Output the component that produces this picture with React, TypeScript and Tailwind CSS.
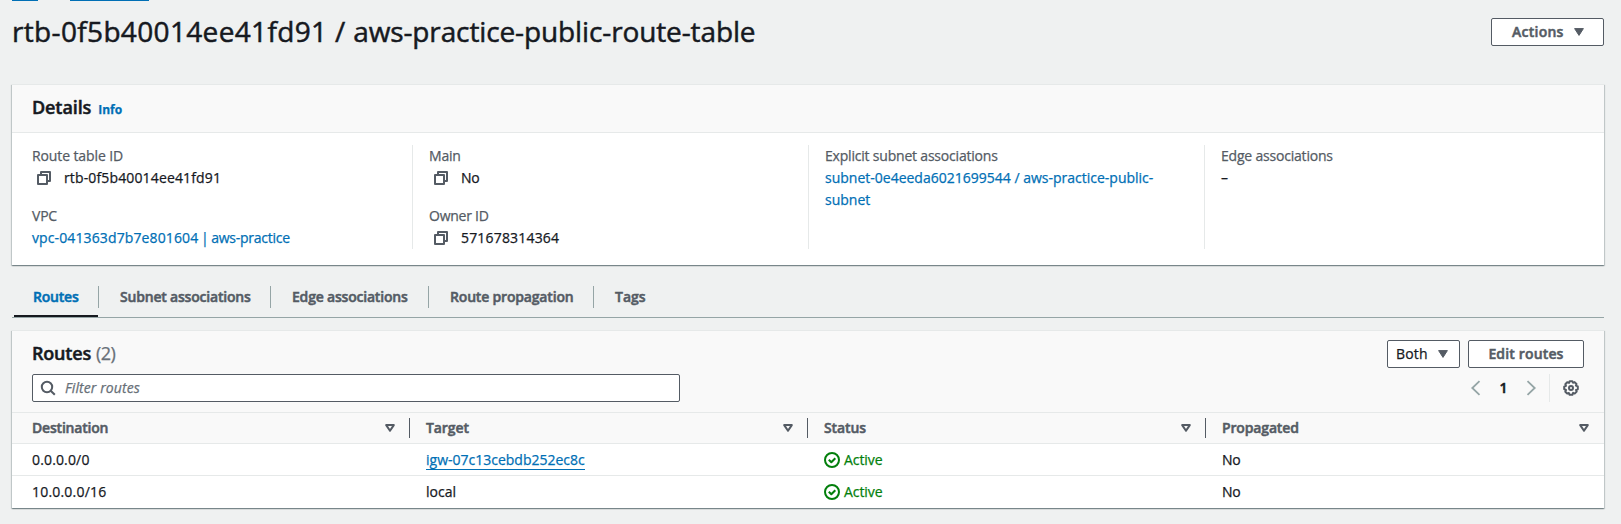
import React, { type ReactNode } from "react";

const bold = "font-semibold [-webkit-text-stroke:0.5px_currentColor]";

function CopyIcon() {
  return (
    <svg viewBox="0 0 16 16" className="mr-3 ml-1 size-4 shrink-0" fill="none" stroke="#545b64" strokeWidth="2" strokeLinejoin="round">
      <path d="M2 5h9v9H2z" />
      <path d="M5 5V2h9v9h-3" />
    </svg>
  );
}

function CaretFilled() {
  return (
    <svg viewBox="0 0 10 8" className="h-2 w-2.5 shrink-0" fill="#545b64" stroke="#545b64" strokeLinejoin="round">
      <path d="M.6.6h8.8L5 7.4z" />
    </svg>
  );
}

function SortIcon() {
  return (
    <svg viewBox="0 0 10 8" className="h-2 w-2.5 shrink-0" fill="none" stroke="#545b64" strokeWidth="2" strokeLinejoin="round">
      <path d="M1.2 1.1h7.6L5 6.8z" />
    </svg>
  );
}

function Chevron({ flip }: { flip?: boolean }) {
  return (
    <svg viewBox="0 0 16 16" className={flip ? "size-4 -scale-x-100" : "size-4"} fill="none" stroke="#95a5a6" strokeWidth="1.8">
      <path d="M11.5 1.2 4.3 8l7.2 6.8" />
    </svg>
  );
}

function GearIcon() {
  return (
    <svg viewBox="0 0 16 16" className="size-4" fill="none" stroke="#545b64" strokeWidth="2" strokeLinejoin="round">
      <path d="M6.7 1.2h2.6l.7 1.5 1.6-.6 1.9 1.9-.6 1.6 1.9.8v2.8l-1.8.7.7 1.7-2 2-1.6-.7-.7 1.9H6.6l-.7-1.8-1.7.6-1.9-1.9.7-1.7-1.8-.8V6.7L3 5.9l-.7-1.7 1.9-2 1.8.7z" />
      <circle cx="8" cy="8" r="2" />
    </svg>
  );
}

function Active() {
  return (
    <span className="flex items-center text-[#037f0c]">
      <svg viewBox="0 0 16 16" className="mr-1 size-4" fill="none" stroke="currentColor" strokeWidth="2" strokeLinejoin="round">
        <circle cx="8" cy="8" r="7" />
        <path d="m4.8 7.8 2.5 2.5 4-4.1" />
      </svg>
      <span className="-tracking-[0.08px]">Active</span>
    </span>
  );
}

function Panel({ children, className }: { children: ReactNode; className?: string }) {
  return (
    <section
      className={`mr-[17px] ml-3 border-t border-[#e6e9e9] bg-white shadow-[0_1px_1px_0_rgba(0,28,36,0.3),1px_1px_1px_0_rgba(0,28,36,0.15),-1px_1px_1px_0_rgba(0,28,36,0.15)] ${className ?? ""}`}
    >
      {children}
    </section>
  );
}

function Field({ label, labelClass, children }: { label: string; labelClass?: string; children: ReactNode }) {
  return (
    <div>
      <div className={`text-[#545b64] ${labelClass ?? ""}`}>{label}</div>
      <div className="flex items-center">{children}</div>
    </div>
  );
}

const column = "flex w-[396px] flex-col gap-4 border-l border-[#e6e9e9] pl-4 pr-4";
const tab = "flex h-[22px] items-center border-r border-[#95a5a6]";
const heading = "flex h-5 items-center justify-between border-r";

export default function App() {
  return (
    <div className="h-[524px] w-[1621px] overflow-hidden bg-[#eff1f1] font-['Open_Sans','Noto_Sans',sans-serif] text-[14px] leading-[22px] text-[#16191f] [-webkit-text-stroke:0.25px_currentColor]">
      <div className="flex h-px gap-8 pl-3">
        <span className="w-[26px] bg-[#006fb5]" />
        <span className="w-[79px] bg-[#006fb5]" />
      </div>

      <header className="flex h-[83px] items-start justify-between pr-[17px] pl-3">
        <h1 className="mt-3 text-[28px] leading-9 [-webkit-text-stroke:0.5px_currentColor]">
          <span className="tracking-[0.34px]">rtb-0f5b40014ee41fd91 / </span>
          <span className="-tracking-[0.12px]">aws-practice-public-route-table</span>
        </h1>
        <button className={`mt-[17px] flex h-7 w-[113px] items-center rounded-[2px] border border-[#545b64] bg-white pl-5 text-[#545b64] ${bold}`}>
          <span className="mr-[10px] tracking-[0.25px]">Actions</span>
          <CaretFilled />
        </button>
      </header>

      <Panel className="h-[181px]">
        <div className="flex h-12 items-center border-b border-[#e6e9e9] bg-[#f9f9f9] pb-[3px] pl-5">
          <h2 className={`text-[18px] -tracking-[0.1px] ${bold}`}>Details</h2>
          <a className="mt-[6px] ml-[7px] text-[12px] font-bold text-[#006fb5]">Info</a>
        </div>
        <div className="flex h-[116px] pt-3 pl-5">
          <div className="flex w-[380px] flex-col gap-4">
            <Field label="Route table ID" labelClass="-tracking-[0.11px]">
              <CopyIcon />
              <span className="tracking-[0.14px]">rtb-0f5b40014ee41fd91</span>
            </Field>
            <Field label="VPC" labelClass="-tracking-[0.2px]">
              <a className="text-[#006fb5]">
                <span className="tracking-[0.12px]">vpc-041363d7b7e801604</span>
                <span className="-tracking-[0.25px] [word-spacing:-0.7px]"> | aws-practice</span>
              </a>
            </Field>
          </div>
          <div className={column}>
            <Field label="Main" labelClass="-tracking-[0.2px]">
              <CopyIcon />
              <span className="-tracking-[0.2px]">No</span>
            </Field>
            <Field label="Owner ID" labelClass="-tracking-[0.25px]">
              <CopyIcon />
              <span className="tracking-[0.18px]">571678314364</span>
            </Field>
          </div>
          <div className={column}>
            <Field label="Explicit subnet associations" labelClass="-tracking-[0.2px]">
              <a className="text-[#006fb5]">subnet-0e4eeda6021699544 / aws-practice-public-subnet</a>
            </Field>
          </div>
          <div className={column}>
            <Field label="Edge associations" labelClass="-tracking-[0.2px]">–</Field>
          </div>
        </div>
      </Panel>

      <nav className={`mr-[17px] ml-3 flex h-[53px] border-b border-[#95a5a6] pt-[21px] pl-0.5 text-[#545b64] ${bold}`}>
        <div className="flex w-[85px] flex-col justify-between">
          <div className={`${tab} w-full pl-[19px] -tracking-[0.2px] text-[#006fb5]`}>Routes</div>
          <div className="h-0.5 w-[84px] bg-[#16191f]" />
        </div>
        <div className={`${tab} w-[172px] pl-[21px] -tracking-[0.2px]`}>Subnet associations</div>
        <div className={`${tab} w-[158px] pl-[21px] -tracking-[0.2px]`}>Edge associations</div>
        <div className={`${tab} w-[165px] pl-[21px] -tracking-[0.18px]`}>Route propagation</div>
        <div className="pl-[21px]">Tags</div>
      </nav>

      <Panel className="mt-3 h-[178px]">
        <div className="bg-[#f9f9f9]">
          <div className="flex items-center justify-between pt-[9px] pr-5 pl-5">
            <h2 className="mb-0.5 flex gap-[5px] text-[18px]">
              <span className={`${bold} -tracking-[0.2px]`}>Routes</span>
              <span className="-tracking-[0.5px] text-[#687078]">(2)</span>
            </h2>
            <div className="flex gap-2">
              <button className="flex h-7 w-[73px] items-center justify-between rounded-[2px] border border-[#545b64] bg-white pr-[11px] pl-2">
                <span className="tracking-[0.15px]">Both</span>
                <CaretFilled />
              </button>
              <button className={`h-7 w-[116px] rounded-[2px] border border-[#545b64] bg-white leading-[26px] tracking-[0.15px] text-[#545b64] ${bold}`}>
                Edit routes
              </button>
            </div>
          </div>
          <div className="flex h-[44px] items-start justify-between pt-[6px] pr-[25px] pl-5">
            <div className="flex h-7 w-[648px] items-center rounded-[2px] border border-[#545b64] bg-white pl-[7px] tracking-[0.1px] text-[#687078] italic">
              <svg viewBox="0 0 16 16" className="mr-[9px] size-4" fill="none" stroke="#545b64" strokeWidth="2">
                <circle cx="7" cy="7" r="5.2" />
                <path d="m10.7 10.7 4.1 4.1" />
              </svg>
              Filter routes
            </div>
            <div className="flex h-7 items-center">
              <Chevron />
              <span className={`w-[39px] text-center ${bold}`}>1</span>
              <Chevron flip />
              <span className="mr-[13px] ml-[10px] h-7 w-px bg-[#e6e9e9]" />
              <GearIcon />
            </div>
          </div>
        </div>

        <div className={`flex h-8 items-center border-y border-[#e6e9e9] bg-[#f9f9f9] pl-5 text-[#545b64] ${bold}`}>
          <div className={`${heading} w-[378px] border-[#545b64] pr-[14px] -tracking-[0.2px]`}>
            Destination
            <SortIcon />
          </div>
          <div className={`${heading} w-[398px] border-[#545b64] pr-[14px] pl-4 -tracking-[0.1px]`}>
            Target
            <SortIcon />
          </div>
          <div className={`${heading} w-[398px] border-[#545b64] pr-[14px] pl-4 -tracking-[0.1px]`}>
            Status
            <SortIcon />
          </div>
          <div className={`${heading} w-[397px] border-transparent pr-[13px] pl-4 -tracking-[0.15px]`}>
            Propagated
            <SortIcon />
          </div>
        </div>
        <div className="flex h-8 items-center border-b border-[#e6e9e9] pl-5">
          <div className="w-[394px] tracking-[0.15px]">0.0.0.0/0</div>
          <div className="w-[398px]">
            <a className="inline-block h-[21px] border-b border-[#006fb5] align-top leading-[22px] text-[#006fb5]">igw-07c13cebdb252ec8c</a>
          </div>
          <div className="w-[398px]">
            <Active />
          </div>
          <div className="-tracking-[0.2px]">No</div>
        </div>
        <div className="flex h-8 items-center pl-5">
          <div className="w-[394px] tracking-[0.2px]">10.0.0.0/16</div>
          <div className="w-[398px]">local</div>
          <div className="w-[398px]">
            <Active />
          </div>
          <div className="-tracking-[0.2px]">No</div>
        </div>
      </Panel>
    </div>
  );
}
